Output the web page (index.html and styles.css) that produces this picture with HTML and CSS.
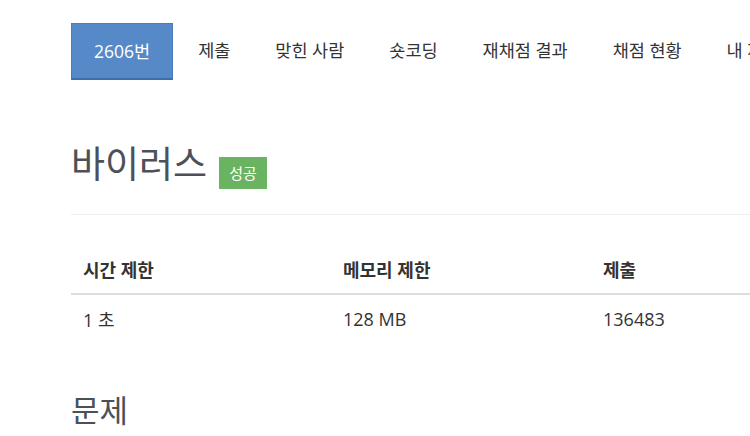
FILE: index.html
```html
<!DOCTYPE html>
<html lang="ko">

<head>
    <meta charset="UTF-8">
    <title>2606번: 바이러스</title>
    <link rel="stylesheet" href="styles.css">
</head>

<body>
    <div class="wrapper">
        <ul class="problem-menu">
            <li class="active"><a href="#">2606번</a></li>
            <li><a href="#">제출</a></li>
            <li><a href="#">맞힌 사람</a></li>
            <li><a href="#">숏코딩</a></li>
            <li><a href="#">재채점 결과</a></li>
            <li><a href="#">채점 현황</a></li>
            <li><a href="#">내 제출</a></li>
            <li><a href="#">질문 게시판</a></li>
        </ul>

        <div class="page-header">
            <h1>바이러스 <span class="label-success">성공</span></h1>
        </div>

        <table class="problem-info">
            <thead>
                <tr>
                    <th>시간 제한</th>
                    <th>메모리 제한</th>
                    <th>제출</th>
                    <th>정답</th>
                    <th>맞힌 사람</th>
                </tr>
            </thead>
            <tbody>
                <tr>
                    <td>1 초</td>
                    <td>128 MB</td>
                    <td>136483</td>
                    <td>64029</td>
                    <td>42340</td>
                </tr>
            </tbody>
        </table>

        <h2 class="section-title">문제</h2>
    </div>
</body>

</html>
```

FILE: styles.css
```css
/* General Styles */
body {
    margin: 0;
    background: #ffffff;
    font-family: "Open Sans", "Noto Sans CJK KR", sans-serif;
    color: #333333;
    overflow: hidden;
}

.wrapper {
    width: 1170px;
    padding: 23px 0 0 71px;
}

/* Problem menu */
.problem-menu {
    display: flex;
    list-style: none;
    margin: 0;
    padding: 0;
    gap: 5px;
}

.problem-menu li a {
    display: block;
    height: 57px;
    line-height: 55px;
    padding: 0 20px;
    font-size: 17.5px;
    color: #333333;
    text-decoration: none;
    white-space: nowrap;
    box-sizing: border-box;
}

.problem-menu li.active a {
    padding: 0 22px;
    background: #5589c7;
    color: #ffffff;
    border: 1px solid #4a7cbb;
    border-bottom: 2px solid #3f6fab;
}

/* Title */
.page-header {
    margin-top: 64px;
    padding-bottom: 29px;
    border-bottom: 1px solid #eeeeee;
}

.page-header h1 {
    margin: 0;
    font-size: 37px;
    font-weight: 400;
    line-height: 1.1;
    color: #4b5059;
    display: flex;
    align-items: flex-end;
    gap: 12px;
}

.label-success {
    display: inline-block;
    background: #6ab361;
    color: #ffffff;
    font-size: 15px;
    padding: 0 10px;
    height: 32px;
    line-height: 32px;
    margin-bottom: -4px;
}

/* Info table */
.problem-info {
    margin-top: 31px;
    border-collapse: collapse;
    width: 1300px;
}

.problem-info th,
.problem-info td {
    width: 236px;
    padding: 0 12px;
    text-align: left;
    font-size: 18px;
}

.problem-info th {
    height: 47px;
    font-weight: 700;
    border-bottom: 2px solid #dddddd;
}

.problem-info td {
    height: 48px;
}

.section-title {
    margin: 43px 0 0;
    font-size: 31px;
    font-weight: 400;
    color: #4b5059;
}
```
